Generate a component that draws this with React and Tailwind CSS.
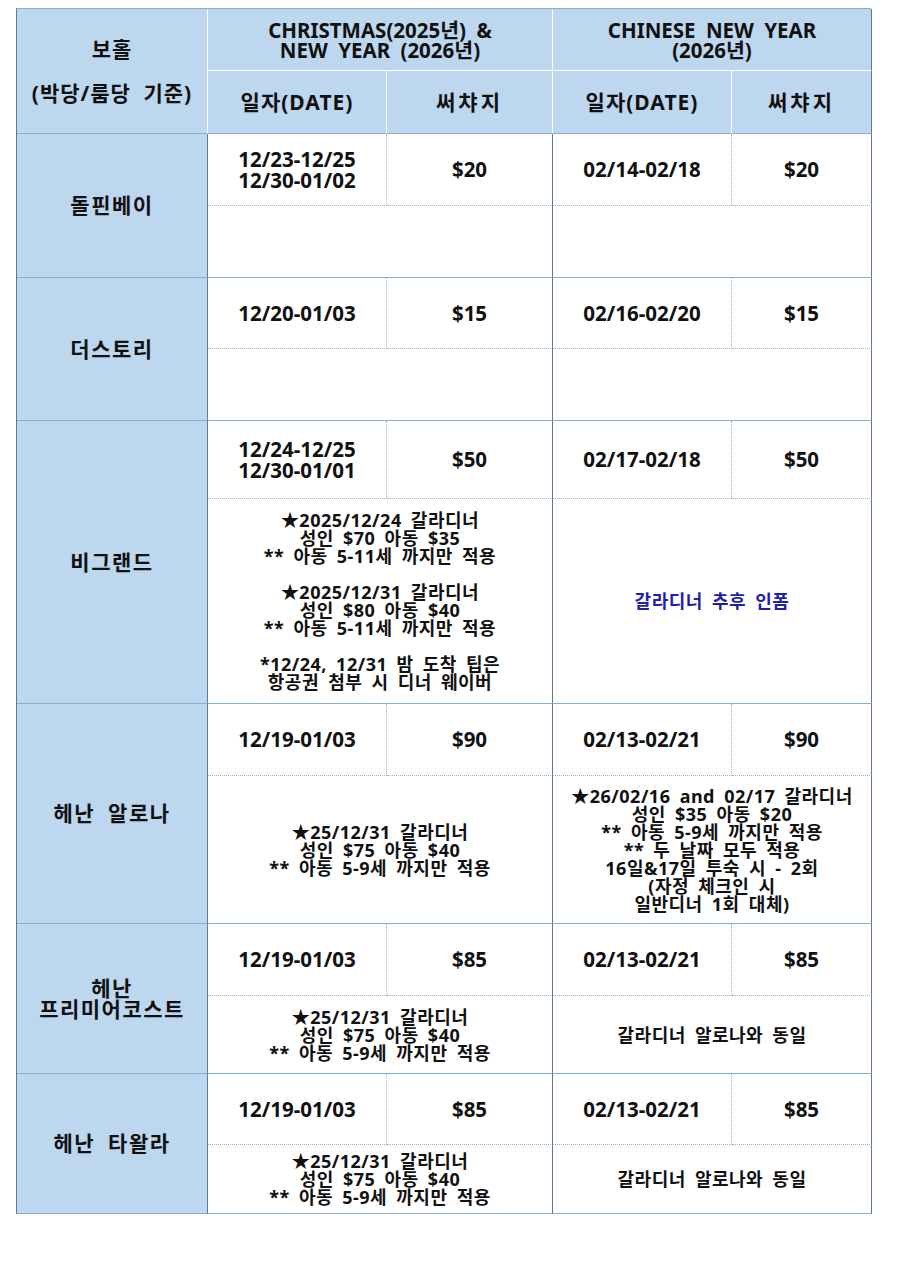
const V = "border-r-[#56799c]";
const H = "border-b-[#86aed4]";

const hotels = [
  { name: ["돌핀베이"], h: ["h-[72px]", "h-[72px]"], xd: ["12/23-12/25", "12/30-01/02"], xp: "$20", cd: "02/14-02/18", cp: "$20", xn: null, cn: null },
  { name: ["더스토리"], h: ["h-[71px]", "h-[72px]"], xd: ["12/20-01/03"], xp: "$15", cd: "02/16-02/20", cp: "$15", xn: null, cn: null },
  {
    name: ["비그랜드"], h: ["h-[78px]", "h-[205px]"], xd: ["12/24-12/25", "12/30-01/01"], xp: "$50", cd: "02/17-02/18", cp: "$50",
    xn: ["★2025/12/24 갈라디너", "성인 $70 아동 $35", "** 아동 5-11세 까지만 적용", "", "★2025/12/31 갈라디너", "성인 $80 아동 $40", "** 아동 5-11세 까지만 적용", "", "*12/24, 12/31 밤 도착 팁은", "항공권 첨부 시 디너 웨이버"],
    cn: "blue",
  },
  {
    name: ["헤난 알로나"], h: ["h-[72px]", "h-[148px]"], xd: ["12/19-01/03"], xp: "$90", cd: "02/13-02/21", cp: "$90",
    xn: ["★25/12/31 갈라디너", "성인 $75 아동 $40", "** 아동 5-9세 까지만 적용"],
    cn: ["★26/02/16 and 02/17 갈라디너", "성인 $35 아동 $20", "** 아동 5-9세 까지만 적용", "** 두 날짜 모두 적용", "16일&17일 투숙 시 - 2회", "(자정 체크인 시", "일반디너 1회 대체)"],
  },
  {
    name: ["헤난", "프리미어코스트"], h: ["h-[72px]", "h-[78px]"], xd: ["12/19-01/03"], xp: "$85", cd: "02/13-02/21", cp: "$85",
    xn: ["★25/12/31 갈라디너", "성인 $75 아동 $40", "** 아동 5-9세 까지만 적용"],
    cn: ["갈라디너 알로나와 동일"],
  },
  {
    name: ["헤난 타왈라"], h: ["h-[71px]", "h-[69px]"], xd: ["12/19-01/03"], xp: "$85", cd: "02/13-02/21", cp: "$85",
    xn: ["★25/12/31 갈라디너", "성인 $75 아동 $40", "** 아동 5-9세 까지만 적용"],
    cn: ["갈라디너 알로나와 동일"],
  },
];

function Lines({ lines, cls }) {
  return (
    <div className={"flex flex-col items-center text-center " + cls}>
      {lines.map((l, i) => (
        <span key={i} className="whitespace-pre">{l === "" ? " " : l}</span>
      ))}
    </div>
  );
}

function HotelRows({ hotel }) {
  const cell = "flex items-center justify-center border-b border-r";
  const dotB = "[border-bottom-style:dotted] border-b-[#9fb0c0]";
  const dotR = "[border-right-style:dotted] border-r-[#9fb0c0]";
  const big = "text-[20.5px] leading-[21px] font-bold";
  const note = "text-[18px] leading-[18px] font-bold tracking-[0.5px] [word-spacing:4px]";
  return (
    <>
      <div className={"row-span-2 bg-[#bdd7ee] " + cell + " " + V + " " + H}>
        <Lines lines={hotel.name} cls="text-[21px] leading-[21px] font-bold tracking-[1.5px] [word-spacing:6px]" />
      </div>
      <div className={hotel.h[0] + " " + cell + " " + dotB + " " + dotR}>
        <Lines lines={hotel.xd} cls={big} />
      </div>
      <div className={cell + " " + dotB + " " + V}>
        <span className={big}>{hotel.xp}</span>
      </div>
      <div className={cell + " " + dotB + " " + dotR}>
        <span className={big}>{hotel.cd}</span>
      </div>
      <div className={cell + " " + dotB + " " + V}>
        <span className={big}>{hotel.cp}</span>
      </div>
      <div className={hotel.h[1] + " col-span-2 " + cell + " " + V + " " + H}>
        {hotel.xn && <Lines lines={hotel.xn} cls={note} />}
      </div>
      <div className={"col-span-2 " + cell + " " + V + " " + H}>
        {hotel.cn === "blue" ? (
          <span className={note + " text-[#1f1fa8]"}>갈라디너 추후 인폼</span>
        ) : (
          hotel.cn && <Lines lines={hotel.cn} cls={note} />
        )}
      </div>
    </>
  );
}

export default function App() {
  const hcell = "flex items-center justify-center bg-[#bdd7ee] border-r border-b";
  const head = "text-[21px] leading-[22px] font-bold tracking-[1px]";
  return (
    <div
      className="w-[905px] h-[1280px] bg-white pl-[16px] pt-[8px] text-[#111]"
      style={{ fontFamily: '"Noto Sans", "Noto Sans CJK KR", sans-serif' }}
    >
      <div className="grid w-[855px] grid-cols-[191px_179px_166px_179px_140px] border-l border-t border-l-[#56799c] border-t-[#86aed4]">
        <div className={"row-span-2 flex-col gap-[22px] " + hcell + " border-r-white " + H}>
          <span className={head}>보홀</span>
          <span className={head + " [word-spacing:6px]"}>(박당/룸당 기준)</span>
        </div>
        <div className={"col-span-2 h-[62px] " + hcell + " border-r-white border-b-white"}>
          <Lines lines={["CHRISTMAS(2025년) &", "NEW YEAR (2026년)"]} cls="text-[20.5px] leading-[20px] font-bold [word-spacing:5px]" />
        </div>
        <div className={"col-span-2 " + hcell + " border-b-white " + V}>
          <Lines lines={["CHINESE NEW YEAR", "(2026년)"]} cls="text-[20.5px] leading-[20px] font-bold [word-spacing:5px]" />
        </div>
        <div className={"h-[63px] " + hcell + " border-r-white " + H}>
          <span className={head}>일자(DATE)</span>
        </div>
        <div className={hcell + " border-r-white " + H}>
          <span className={head + " tracking-[3px]"}>써챠지</span>
        </div>
        <div className={hcell + " border-r-white " + H}>
          <span className={head}>일자(DATE)</span>
        </div>
        <div className={hcell + " " + V + " " + H}>
          <span className={head + " tracking-[3px]"}>써챠지</span>
        </div>
        {hotels.map((h, i) => (
          <HotelRows key={i} hotel={h} />
        ))}
      </div>
    </div>
  );
}
